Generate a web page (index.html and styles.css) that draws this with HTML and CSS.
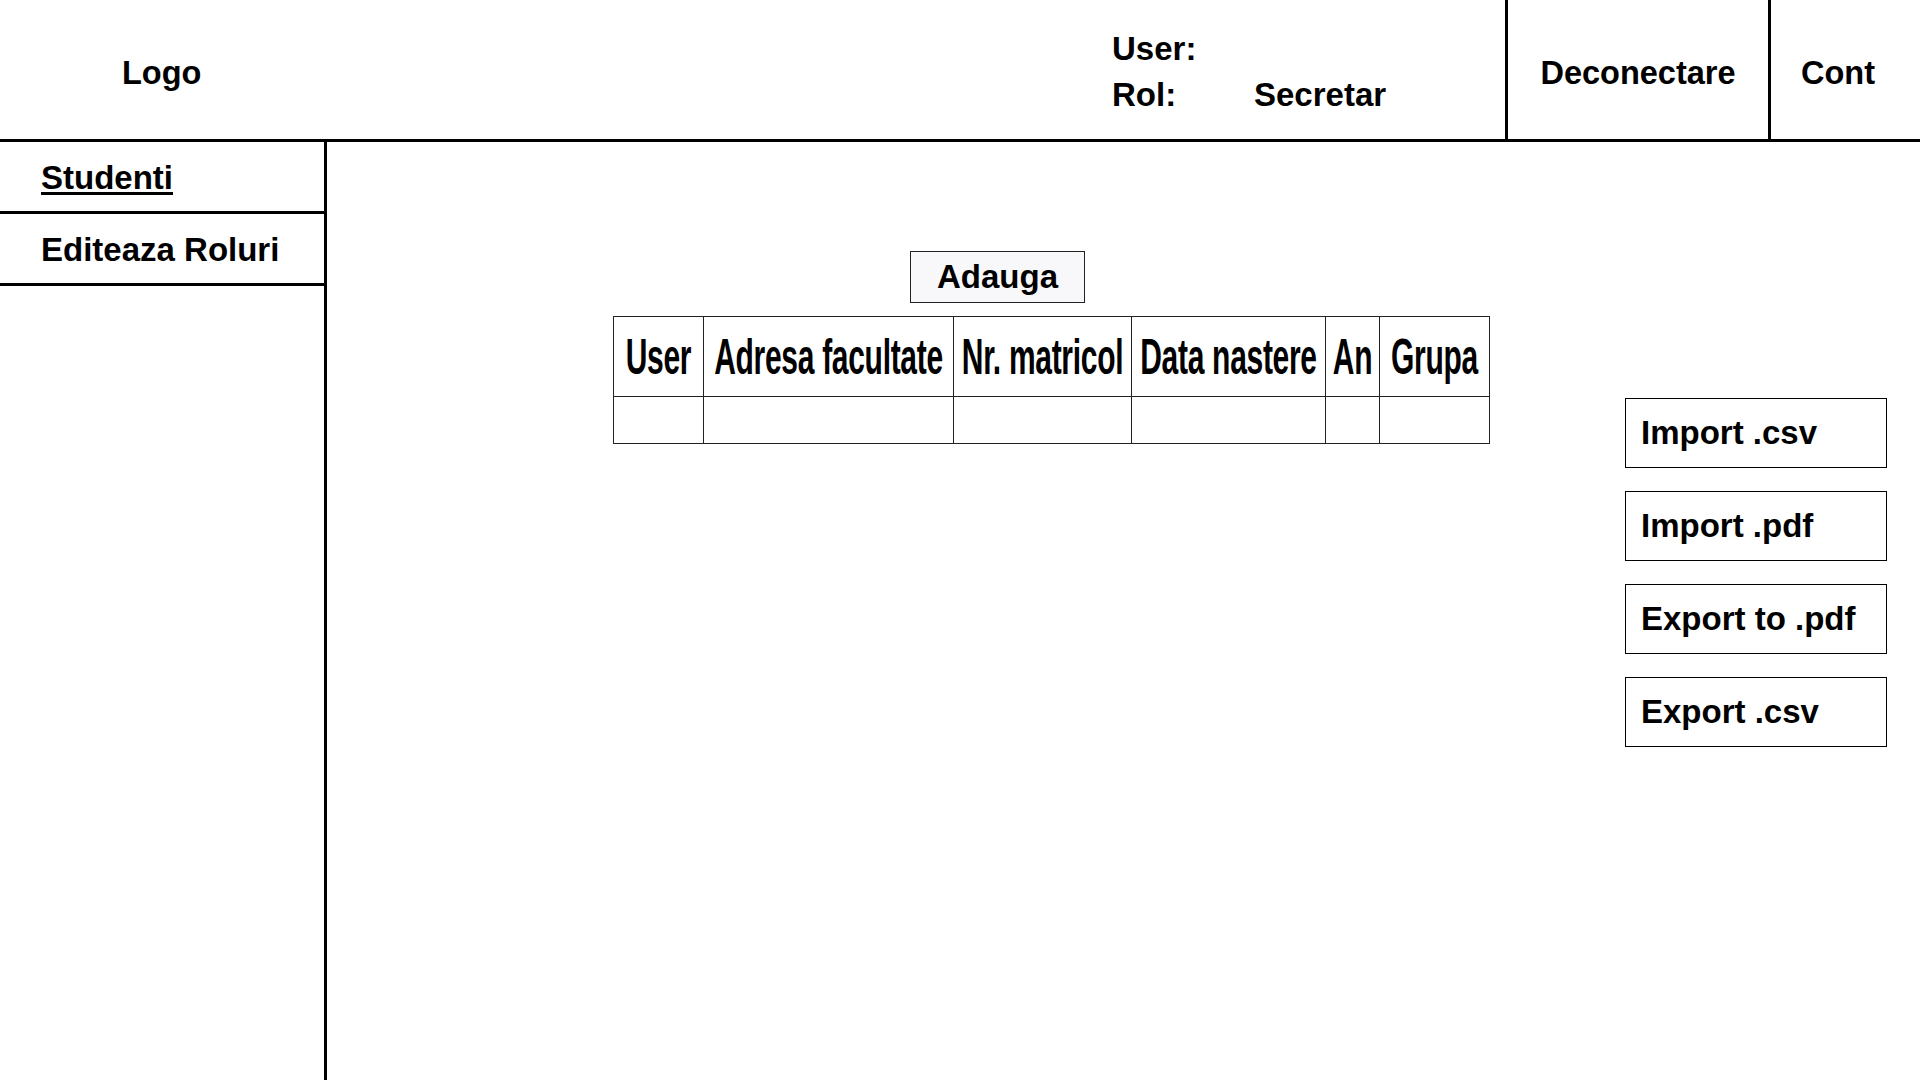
FILE: index.html
```html
<!DOCTYPE html>
<html lang="ro">
<head>
<meta charset="utf-8">
<title>Studenti</title>
<link rel="stylesheet" href="styles.css">
</head>
<body>
<header class="topbar">
  <div class="logo">Logo</div>
  <div class="user-info">
    <div class="info-row"><span class="info-label">User:</span><span class="info-value"></span></div>
    <div class="info-row"><span class="info-label">Rol:</span><span class="info-value">Secretar</span></div>
  </div>
  <a class="top-link top-link--logout" href="#">Deconectare</a>
  <a class="top-link top-link--account" href="#">Cont</a>
</header>
<div class="layout">
  <nav class="sidebar">
    <a class="nav-item nav-item--active" href="#"><span>Studenti</span></a>
    <a class="nav-item" href="#"><span>Editeaza Roluri</span></a>
  </nav>
  <main class="content">
    <section class="students">
      <button class="add-btn" type="button">Adauga</button>
      <table class="students-table">
        <colgroup>
          <col class="col-user">
          <col class="col-address">
          <col class="col-number">
          <col class="col-birth">
          <col class="col-year">
          <col class="col-group">
        </colgroup>
        <thead>
          <tr>
            <th><span>User</span></th>
            <th><span>Adresa facultate</span></th>
            <th><span>Nr. matricol</span></th>
            <th><span>Data nastere</span></th>
            <th><span>An</span></th>
            <th><span>Grupa</span></th>
          </tr>
        </thead>
        <tbody>
          <tr><td></td><td></td><td></td><td></td><td></td><td></td></tr>
        </tbody>
      </table>
    </section>
    <aside class="actions">
      <button class="action-btn" type="button">Import .csv</button>
      <button class="action-btn" type="button">Import .pdf</button>
      <button class="action-btn" type="button">Export to .pdf</button>
      <button class="action-btn" type="button">Export .csv</button>
    </aside>
  </main>
</div>
</body>
</html>
```
FILE: styles.css
```css
* { box-sizing: border-box; }

html, body { margin: 0; padding: 0; }

body {
  width: 1920px;
  height: 1080px;
  overflow: hidden;
  background: #fff;
  color: #000;
  font-family: "Liberation Sans", Arial, sans-serif;
  font-weight: 700;
}

/* ---------- top bar ---------- */
.topbar {
  display: flex;
  height: 142px;
  border-bottom: 3px solid #000;
}

.logo {
  display: flex;
  align-items: center;
  padding-left: 122px;
  padding-top: 8px;
  font-size: 32.5px;
}

.user-info {
  margin-left: auto;
  width: 393px;
  display: flex;
  flex-direction: column;
  justify-content: center;
  padding-top: 4px;
  font-size: 33px;
  line-height: 46px;
}

.info-row { display: flex; }
.info-label { width: 142px; }

.top-link {
  display: flex;
  align-items: center;
  padding-top: 8px;
  border-left: 3px solid #000;
  color: #000;
  text-decoration: none;
  font-size: 32.5px;
}

.top-link--logout {
  width: 263px;
  justify-content: center;
}

.top-link--account {
  width: 152px;
  padding-left: 30px;
}

/* ---------- layout ---------- */
.layout {
  display: flex;
  height: 938px;
}

.sidebar {
  width: 327px;
  flex-shrink: 0;
  border-right: 3px solid #000;
  display: flex;
  flex-direction: column;
}

.nav-item {
  display: flex;
  align-items: center;
  height: 72px;
  padding-left: 41px;
  padding-top: 3px;
  border-bottom: 3px solid #000;
  color: #000;
  text-decoration: none;
  font-size: 33px;
}

.nav-item--active span {
  text-decoration: underline;
  text-decoration-thickness: 3px;
  text-underline-offset: 3px;
}

/* ---------- content ---------- */
.content {
  flex: 1;
  display: flex;
  align-items: flex-start;
}

.students {
  margin-left: 286px;
  padding-top: 109px;
  display: flex;
  flex-direction: column;
  align-items: flex-start;
}

.add-btn {
  margin-left: 297px;
  margin-bottom: 13px;
  width: 175px;
  height: 52px;
  padding: 0;
  border: 1px solid #222;
  background: #f8f8fa;
  color: #000;
  font-family: inherit;
  font-weight: 700;
  font-size: 33px;
}

.students-table {
  border-collapse: collapse;
  table-layout: fixed;
  width: 876px;
}

.col-user { width: 90px; }
.col-address { width: 250px; }
.col-number { width: 178px; }
.col-birth { width: 194px; }
.col-year { width: 54px; }
.col-group { width: 110px; }

.students-table th,
.students-table td {
  border: 1px solid #222;
  padding: 0;
  text-align: center;
  white-space: nowrap;
}

.students-table thead tr { height: 80px; }
.students-table tbody tr { height: 47px; }

.students-table th span {
  display: inline-block;
  font-size: 30px;
  font-weight: 700;
  transform: scaleY(1.65);
  letter-spacing: -0.3px;
}

.actions {
  margin-left: 135px;
  padding-top: 256px;
  display: flex;
  flex-direction: column;
  gap: 23px;
}

.action-btn {
  width: 262px;
  height: 70px;
  padding: 0 0 0 15px;
  border: 1px solid #000;
  background: #fff;
  color: #000;
  text-align: left;
  font-family: inherit;
  font-weight: 700;
  font-size: 33px;
}
```
